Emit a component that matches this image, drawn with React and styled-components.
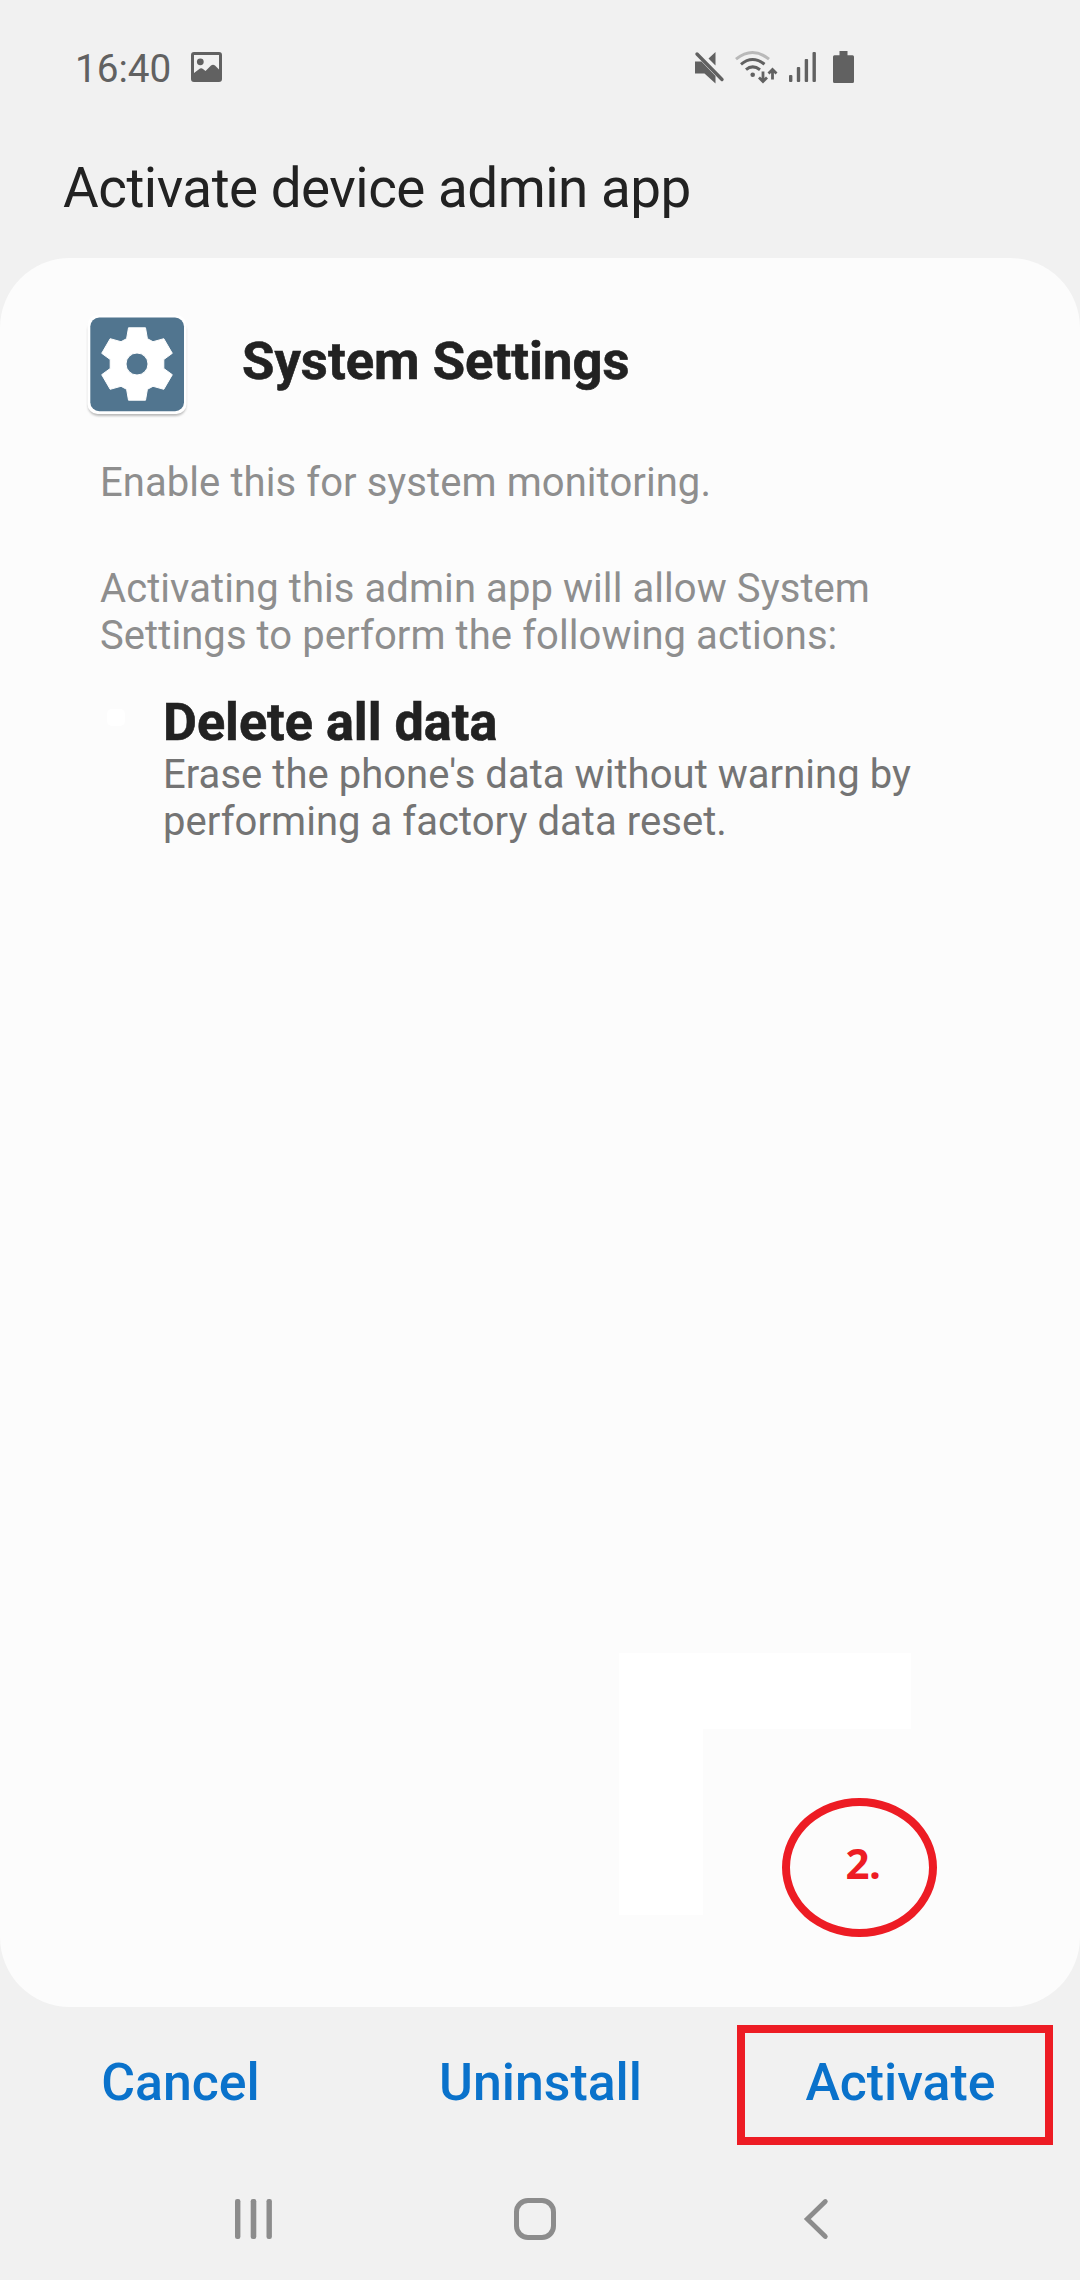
import React from 'react';
import styled, { createGlobalStyle } from 'styled-components';

const colors = {
  page: '#f1f1f1',
  card: '#fcfcfc',
  ink: '#222222',
  status: '#616161',
  muted: '#8e8e8e',
  body: '#747474',
  link: '#0a72cb',
  nav: '#8c8c8c',
  mark: '#ed1c24',
};

const GlobalStyle = createGlobalStyle`
  *, *::before, *::after { box-sizing: border-box; }
  body { margin: 0; background: ${colors.page}; }
`;

const Screen = styled.div`
  display: flex;
  flex-direction: column;
  width: 1080px;
  height: 2280px;
  overflow: hidden;
  background: ${colors.page};
  color: ${colors.ink};
  font-family: Roboto, "Liberation Sans", sans-serif;
`;

const StatusBar = styled.header`
  flex: none;
  display: flex;
  align-items: center;
  justify-content: space-between;
  height: 134px;
  padding: 0 226px 0 75px;
  color: ${colors.status};
`;

const StatusGroup = styled.div`
  display: flex;
  align-items: center;
`;

const Clock = styled.span`
  font-size: 38.7px;
  line-height: 46px;
  margin-top: 4px;
`;

const Glyph = styled.svg`
  display: block;
  flex: none;
  width: ${(p) => p.$w}px;
  height: ${(p) => p.$h}px;
  margin-left: ${(p) => p.$before || 0}px;
  overflow: visible;
`;

const PageTitle = styled.h1`
  flex: none;
  margin: 0;
  padding: 2px 64px 17px 63px;
  font-size: 54.8px;
  font-weight: 400;
  line-height: 105px;
  letter-spacing: -0.5px;
`;

const Card = styled.main`
  flex: none;
  position: relative;
  height: 1749px;
  padding: 56px 100px 0;
  border-radius: 70px;
  background: ${colors.card};
`;

const AppHeader = styled.section`
  display: flex;
  align-items: center;
  gap: 55px;
  height: 100px;
  margin-left: -13px;
  margin-bottom: 45px;
`;

const AppTile = styled.div`
  display: grid;
  place-items: center;
  width: 100px;
  height: 100px;
  padding: 0 0 1px;
`;

const AppName = styled.h2`
  margin: 0;
  padding-bottom: 6px;
  font-size: 52.6px;
  font-weight: 700;
  line-height: 62px;
  -webkit-text-stroke: 0.6px ${colors.ink};
`;

const Paragraph = styled.p`
  margin: 0 0 ${(p) => p.$after}px;
  color: ${colors.muted};
  font-size: 40px;
  line-height: 47px;
  letter-spacing: 0.07px;
`;

const Policy = styled.section`
  display: grid;
  grid-template-columns: 63px 1fr;
`;

const Bullet = styled.span`
  width: 18px;
  height: 17px;
  margin: 14px 0 0 7px;
  border-radius: 5px;
  background: #fff;
`;

const PolicyTitle = styled.h3`
  margin: 0;
  font-size: 52.2px;
  font-weight: 700;
  line-height: 56px;
  -webkit-text-stroke: 0.6px ${colors.ink};
`;

const PolicyText = styled.p`
  margin: 0;
  color: ${colors.body};
  font-size: 40px;
  line-height: 47px;
  letter-spacing: 0.04px;
`;

const Patch = styled.div`
  position: absolute;
  left: 619px;
  top: 1395px;
  width: ${(p) => p.$w}px;
  height: ${(p) => p.$h}px;
  background: #fff;
`;

const StepMark = styled.div`
  position: absolute;
  left: 782px;
  top: 1540px;
  display: flex;
  justify-content: center;
  align-items: center;
  width: 155px;
  height: 139px;
  padding: 0 0 10px 7px;
  border: 8px solid ${colors.mark};
  border-radius: 50%;
  color: ${colors.mark};
  font: 700 42px/56px "Open Sans", "Noto Sans", sans-serif;
  letter-spacing: -0.5px;
`;

const Actions = styled.footer`
  flex: none;
  display: grid;
  grid-template-columns: repeat(3, 1fr);
  height: 150px;
`;

const Action = styled.button`
  position: relative;
  padding: 2px 0 0 1px;
  border: 0;
  background: none;
  color: ${colors.link};
  font: 500 51.8px/62px Roboto, "Liberation Sans", sans-serif;
`;

const Highlight = styled.span`
  position: absolute;
  left: 17px;
  top: 18px;
  width: 316px;
  height: 120px;
  border: 8px solid ${colors.mark};
`;

const NavBar = styled.nav`
  flex: none;
  display: grid;
  grid-template-columns: repeat(3, 281px);
  place-items: center;
  height: 123px;
  padding-left: 113px;
  padding-top: 1px;
  color: ${colors.nav};
`;

function PictureIcon() {
  return (
    <Glyph $w={31} $h={30} $before={20} viewBox="0 0 31 30">
      <path
        fill="currentColor"
        fillRule="evenodd"
        d="M3 0H28A3 3 0 0 1 31 3V27A3 3 0 0 1 28 30H3A3 3 0 0 1 0 27V3A3 3 0 0 1 3 0ZM3 3V21L9 16.5Q10.5 15.6 12 17L14.5 19L20 13.6Q22 12 24 13.6L28 17.5V3Z"
      />
      <circle cx="9.3" cy="9.8" r="3.4" fill="currentColor" />
    </Glyph>
  );
}

function MuteIcon() {
  return (
    <Glyph $w={29} $h={33} viewBox="0 0 29 33">
      <path fill="currentColor" d="M20.5 1V14.5L13.5 7.5ZM0 10.5H6.5L20.5 25V32.5L9.5 22.5H0Z" />
      <path d="M2 3L27 28.5" stroke="currentColor" strokeWidth="3.4" strokeLinecap="round" />
    </Glyph>
  );
}

function WifiIcon() {
  return (
    <Glyph $w={42} $h={32} $before={11} viewBox="0 0 42 32" fill="none" stroke="currentColor" strokeWidth="3">
      <path d="M1 8.2Q17.5 -5.2 34 8.2" stroke="#b9b9b9" />
      <path d="M6 13.3Q17.5 3.8 29.5 13.3" />
      <path d="M11 18.7Q17.5 13 25 18.7" />
      <circle cx="17.7" cy="23.8" r="2.3" fill="currentColor" stroke="none" />
      <path d="M28 20.5V30M24 26.4L28 30.4L32 26.4M37.5 28.5V19M33.5 22.4L37.5 18.4L41.5 22.4" strokeWidth="2.8" />
    </Glyph>
  );
}

function SignalIcon() {
  return (
    <Glyph $w={27} $h={30} $before={12} viewBox="0 0 27 30" fill="currentColor">
      <rect x="0" y="23" width="3.4" height="7" rx="1" />
      <rect x="7.8" y="15" width="3.4" height="15" rx="1" />
      <rect x="15.7" y="7" width="3.4" height="23" rx="1" />
      <rect x="23.5" y="0" width="3.4" height="30" rx="1" />
    </Glyph>
  );
}

function BatteryIcon() {
  return (
    <Glyph $w={21} $h={32} $before={17} viewBox="0 0 21 32" fill="currentColor">
      <path d="M6.5 0H14.5V4.3H19.5A1.5 1.5 0 0 1 21 5.8V30.5A1.5 1.5 0 0 1 19.5 32H1.5A1.5 1.5 0 0 1 0 30.5V5.8A1.5 1.5 0 0 1 1.5 4.3H6.5Z" />
    </Glyph>
  );
}

const TileShadow = styled.rect`
  fill: #b9b9b9;
  filter: blur(1.3px);
`;

function GearTile() {
  return (
    <Glyph $w={98} $h={98} viewBox="-49 -49 98 98">
      <TileShadow x="-49" y="-44" width="98" height="96" rx="10" />
      <rect x="-49.5" y="-49" width="99" height="99" rx="10" fill="#ffffff" />
      <rect x="-46.7" y="-46.5" width="93.7" height="93.7" rx="9" fill="#51758f" />
      <path
        fill="#ffffff"
        fillRule="evenodd"
        stroke="#ffffff"
        strokeWidth="1"
        strokeLinejoin="round"
        d="M-8.5 -36.2H8.5L10.4 -25.3L16 -22.3L26.8 -25.3L35.3 -10.7L26.8 -4.5V4.5L35.3 10.7L26.8 25.3L16 22.3L10.4 25.3L8.5 36.2H-8.5L-10.4 25.3L-16 22.3L-26.8 25.3L-35.3 10.7L-26.8 4.5V-4.5L-35.3 -10.7L-26.8 -25.3L-16 -22.3L-10.4 -25.3ZM0 -11A11 11 0 1 0 0 11A11 11 0 1 0 0 -11Z"
      />
    </Glyph>
  );
}

function RecentsIcon() {
  return (
    <Glyph $w={37} $h={40} viewBox="0 0 37 40" fill="currentColor">
      <rect x="0" y="0" width="5.4" height="40" rx="2.2" />
      <rect x="15.7" y="0" width="5.6" height="40" rx="2.2" />
      <rect x="31.5" y="0" width="5.4" height="40" rx="2.2" />
    </Glyph>
  );
}

function HomeIcon() {
  return (
    <Glyph $w={42} $h={42} viewBox="0 0 42 42">
      <rect x="2.5" y="2.5" width="37" height="37" rx="11.5" fill="none" stroke="currentColor" strokeWidth="5" />
    </Glyph>
  );
}

function BackIcon() {
  return (
    <Glyph $w={24} $h={40} viewBox="0 0 24 40">
      <path d="M21.3 2.5L3.3 20L21.3 37.5" fill="none" stroke="currentColor" strokeWidth="4.8" strokeLinecap="round" />
    </Glyph>
  );
}

export default function App() {
  return (
    <>
      <GlobalStyle />
      <Screen>
        <StatusBar>
          <StatusGroup>
            <Clock>16:40</Clock>
            <PictureIcon />
          </StatusGroup>
          <StatusGroup>
            <MuteIcon />
            <WifiIcon />
            <SignalIcon />
            <BatteryIcon />
          </StatusGroup>
        </StatusBar>
        <PageTitle>Activate device admin app</PageTitle>
        <Card>
          <AppHeader>
            <AppTile>
              <GearTile />
            </AppTile>
            <AppName>System Settings</AppName>
          </AppHeader>
          <Paragraph $after={59}>Enable this for system monitoring.</Paragraph>
          <Paragraph $after={36}>
            Activating this admin app will allow System Settings to perform the following actions:
          </Paragraph>
          <Policy>
            <Bullet />
            <div>
              <PolicyTitle>Delete all data</PolicyTitle>
              <PolicyText>Erase the phone's data without warning by performing a factory data reset.</PolicyText>
            </div>
          </Policy>
          <Patch $w={292} $h={76} />
          <Patch $w={84} $h={262} />
          <StepMark>2.</StepMark>
        </Card>
        <Actions>
          <Action>Cancel</Action>
          <Action>Uninstall</Action>
          <Action>
            Activate
            <Highlight />
          </Action>
        </Actions>
        <NavBar>
          <RecentsIcon />
          <HomeIcon />
          <BackIcon />
        </NavBar>
      </Screen>
    </>
  );
}
